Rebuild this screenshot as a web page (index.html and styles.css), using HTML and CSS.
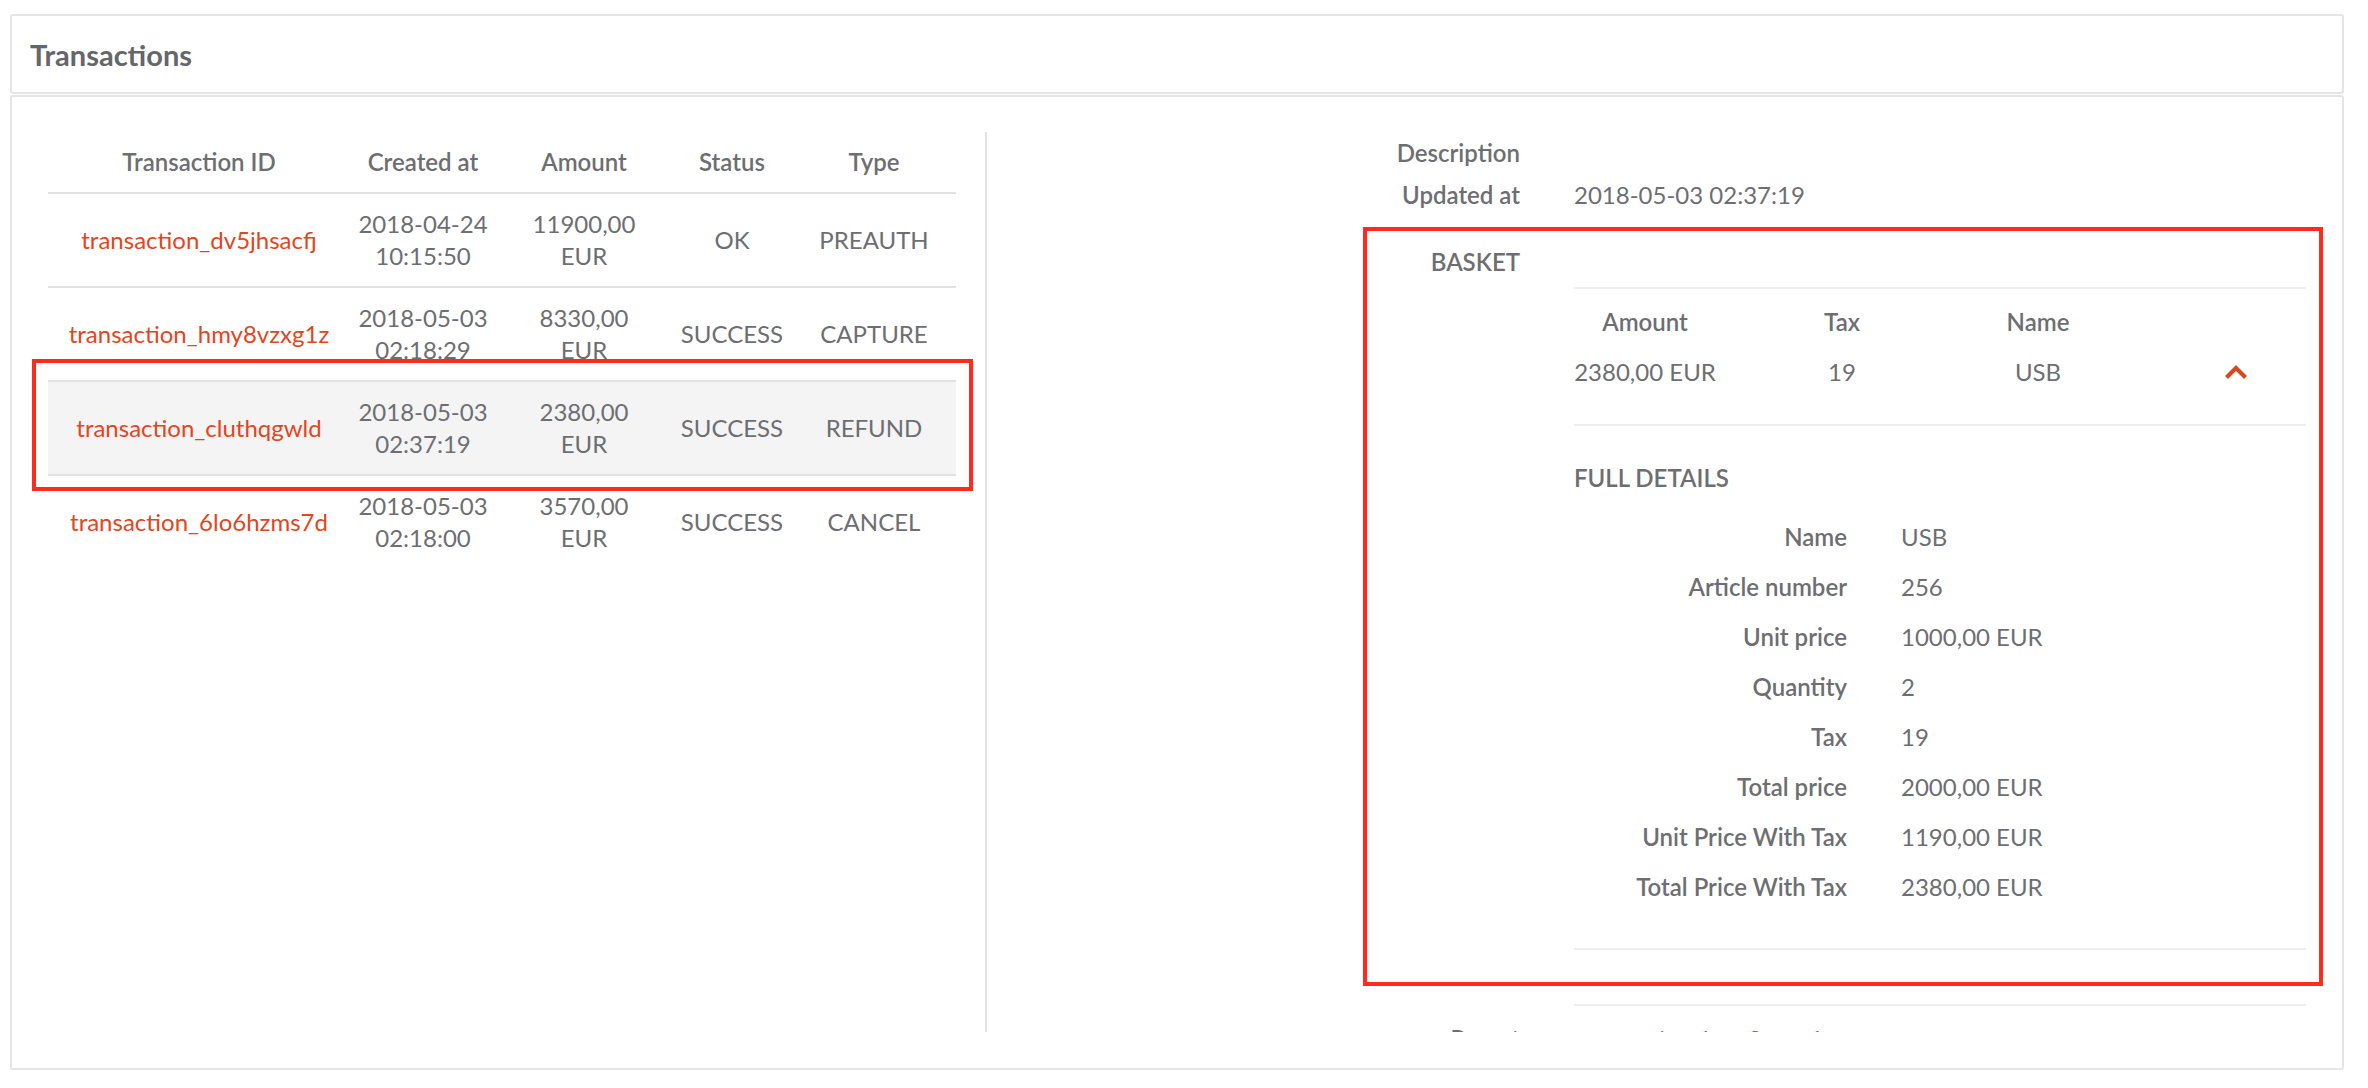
FILE: index.html
```html
<!DOCTYPE html>
<html lang="en">
<head>
<meta charset="utf-8">
<title>Transactions</title>
<link rel="stylesheet" href="styles.css">
</head>
<body>
<div class="page">
  <section class="panel">
    <header class="panel-head"><h1>Transactions</h1></header>
    <div class="panel-body">
      <div class="split">
        <div class="list-pane">
          <table class="tx-table">
            <colgroup>
              <col class="c-id"><col class="c-created"><col class="c-amount"><col class="c-status"><col class="c-type">
            </colgroup>
            <thead>
              <tr><th>Transaction ID</th><th>Created at</th><th>Amount</th><th>Status</th><th>Type</th></tr>
            </thead>
            <tbody>
              <tr>
                <td><a class="link" href="#">transaction_dv5jhsacfj</a></td>
                <td><span class="ln">2018-04-24</span><span class="ln">10:15:50</span></td>
                <td><span class="ln">11900,00</span><span class="ln">EUR</span></td>
                <td>OK</td>
                <td>PREAUTH</td>
              </tr>
              <tr>
                <td><a class="link" href="#">transaction_hmy8vzxg1z</a></td>
                <td><span class="ln">2018-05-03</span><span class="ln">02:18:29</span></td>
                <td><span class="ln">8330,00</span><span class="ln">EUR</span></td>
                <td>SUCCESS</td>
                <td>CAPTURE</td>
              </tr>
              <tr class="is-active">
                <td><a class="link" href="#">transaction_cluthqgwld</a></td>
                <td><span class="ln">2018-05-03</span><span class="ln">02:37:19</span></td>
                <td><span class="ln">2380,00</span><span class="ln">EUR</span></td>
                <td>SUCCESS</td>
                <td>REFUND</td>
              </tr>
              <tr>
                <td><a class="link" href="#">transaction_6lo6hzms7d</a></td>
                <td><span class="ln">2018-05-03</span><span class="ln">02:18:00</span></td>
                <td><span class="ln">3570,00</span><span class="ln">EUR</span></td>
                <td>SUCCESS</td>
                <td>CANCEL</td>
              </tr>
            </tbody>
          </table>
        </div>
        <div class="detail-pane">
          <div class="field"><div class="f-label">Description</div><div class="f-value"></div></div>
          <div class="field"><div class="f-label">Updated at</div><div class="f-value">2018-05-03 02:37:19</div></div>
          <div class="field basket">
            <div class="f-label caps">BASKET</div>
            <div class="f-value basket-value">
              <div class="basket-item">
                <div class="basket-row basket-head"><span>Amount</span><span>Tax</span><span>Name</span><span></span></div>
                <div class="basket-row">
                  <span>2380,00 EUR</span><span>19</span><span>USB</span>
                  <span class="toggle"><svg width="24" height="16" viewBox="0 0 24 16" aria-hidden="true"><polyline points="2.5,13.5 12,4 21.5,13.5" fill="none" stroke="#d9481c" stroke-width="4.2" stroke-linejoin="miter"/></svg></span>
                </div>
              </div>
              <div class="basket-details">
                <h3 class="caps">FULL DETAILS</h3>
                <div class="detail-grid">
                  <div class="d-label">Name</div><div class="d-value">USB</div>
                  <div class="d-label">Article number</div><div class="d-value">256</div>
                  <div class="d-label">Unit price</div><div class="d-value">1000,00 EUR</div>
                  <div class="d-label">Quantity</div><div class="d-value">2</div>
                  <div class="d-label">Tax</div><div class="d-value">19</div>
                  <div class="d-label">Total price</div><div class="d-value">2000,00 EUR</div>
                  <div class="d-label">Unit Price With Tax</div><div class="d-value">1190,00 EUR</div>
                  <div class="d-label">Total Price With Tax</div><div class="d-value">2380,00 EUR</div>
                </div>
              </div>
              <div class="basket-end"></div>
            </div>
          </div>
          <div class="field parent"><div class="f-label">Parent</div><div class="f-value"><a class="link" href="#">transaction_hmy8vzxg1z</a></div></div>
        </div>
      </div>
    </div>
  </section>
  <div class="annot annot-row"></div>
  <div class="annot annot-basket"></div>
</div>
</body>
</html>
```

FILE: styles.css
```css
* { box-sizing: border-box; }

body {
  margin: 0;
  background: #ffffff;
  font-family: Lato, "Noto Sans", "Liberation Sans", sans-serif;
  color: #6d6e71;
}

.page {
  position: relative;
  padding: 14px 24px 0 10px;
}

.panel-head {
  height: 80px;
  border: 2px solid #e5e5e5;
  border-radius: 3px;
  display: flex;
  align-items: center;
  padding: 0 18px;
}

.panel-head h1 {
  margin: 0;
  font-size: 29px;
  font-weight: 700;
  color: #65666a;
}

.panel-body {
  margin-top: 1px;
  border: 2px solid #e5e5e5;
  border-radius: 3px;
  padding: 35px 0 36px;
}

.split {
  display: flex;
  height: 900px;
}

.list-pane {
  flex: none;
  width: 975px;
  padding-left: 36px;
  border-right: 2px solid #e4e4e4;
}

.tx-table {
  width: 908px;
  border-collapse: collapse;
  table-layout: fixed;
  font-size: 24px;
}

.c-id { width: 302px; }
.c-created { width: 146px; }
.c-amount { width: 176px; }
.c-status { width: 120px; }
.c-type { width: 164px; }

.tx-table th {
  font-weight: 600;
  line-height: 32px;
  padding: 14px 0;
  border-bottom: 2px solid #e2e2e2;
  text-align: center;
}

.tx-table td {
  line-height: 32px;
  height: 92px;
  padding: 14px 0;
  border-bottom: 2px solid #e2e2e2;
  text-align: center;
  vertical-align: middle;
  white-space: nowrap;
}

.tx-table tbody tr:last-child td { border-bottom: none; }

.tx-table tr.is-active td { background: #f4f4f4; }

.ln { display: block; }

.link {
  color: #e2461d;
  text-decoration: none;
}

/* right detail pane */
.detail-pane {
  flex: 1;
  min-width: 0;
  padding-right: 36px;
  overflow: hidden;
  font-size: 24px;
}

.field {
  display: grid;
  grid-template-columns: 1fr 732px;
  column-gap: 54px;
  padding: 5px 0;
  line-height: 32px;
}

.f-label {
  text-align: right;
  font-weight: 600;
}

.caps { text-transform: uppercase; }

.field.basket {
  margin-top: 30px;
  padding: 0;
}

.basket-value { padding-top: 41px; }

.basket-item {
  border-top: 2px solid #eeeeee;
  padding: 17px 0 36px;
  display: flex;
  flex-direction: column;
  gap: 18px;
}

.basket-row {
  display: grid;
  grid-template-columns: 142px 252px 140px 1fr;
  line-height: 32px;
  text-align: center;
}

.basket-head { font-weight: 600; }

.toggle {
  text-align: right;
  padding-right: 58px;
  display: flex;
  align-items: center;
  justify-content: flex-end;
}

.toggle svg { display: block; }

.basket-details {
  border-top: 2px solid #eeeeee;
  border-bottom: 2px solid #eeeeee;
  padding: 36px 0;
}

.basket-details h3 {
  margin: 0 0 18px;
  font-size: 24px;
  line-height: 32px;
  font-weight: 600;
}

.detail-grid {
  display: grid;
  grid-template-columns: 273px 1fr;
  column-gap: 54px;
  line-height: 50px;
}

.d-label {
  text-align: right;
  font-weight: 600;
}

.basket-end {
  margin-top: 54px;
  border-top: 2px solid #eeeeee;
}

.field.parent { margin-top: 12px; }

/* review annotations drawn over the screenshot */
.annot {
  position: absolute;
  border: 4px solid #ff2b1f;
  pointer-events: none;
}

.annot-row {
  left: 32px;
  top: 359px;
  width: 941px;
  height: 132px;
}

.annot-basket {
  left: 1363px;
  top: 227px;
  width: 960px;
  height: 759px;
}
```
